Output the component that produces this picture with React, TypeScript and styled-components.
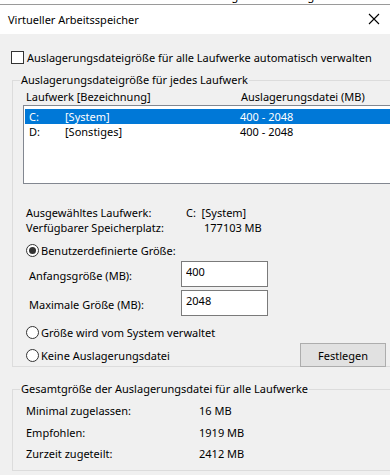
import React from "react";
import styled, { createGlobalStyle } from "styled-components";

const GlobalStyle = createGlobalStyle`
  html, body {
    margin: 0;
    padding: 0;
    background: #f0f0f0;
  }
  body {
    font-family: "Noto Sans", "Liberation Sans", sans-serif;
    font-size: 11px;
    line-height: 15px;
    color: #000;
  }
`;

const drives = [
    { letter: "C:", label: "[System]", size: "400 - 2048", selected: true },
    { letter: "D:", label: "[Sonstiges]", size: "400 - 2048", selected: false },
];

const totals = [
    { label: "Minimal zugelassen:", value: "16 MB" },
    { label: "Empfohlen:", value: "1919 MB" },
    { label: "Zurzeit zugeteilt:", value: "2412 MB" },
];

export default function App() {
    return (
        <>
            <GlobalStyle />
            <Window>
                <BackStrip>
                    <BackText>Visuelle Effekte &nbsp; Erweitert &nbsp; Datenausführungsverhinderung</BackText>
                </BackStrip>
                <TitleBar>
                    <Title>Virtueller Arbeitsspeicher</Title>
                    <Close>
                        <svg width="12" height="12" viewBox="0 0 12 12">
                            <path d="M1 1 L11 11 M11 1 L1 11" stroke="#000" strokeWidth="1.1" fill="none" />
                        </svg>
                    </Close>
                </TitleBar>
                <Body>
                    <CheckRow>
                        <CheckBox />
                        <span>Auslagerungsdateigröße für alle Laufwerke automatisch verwalten</span>
                    </CheckRow>

                    <Group $height={295}>
                        <Legend>Auslagerungsdateigröße für jedes Laufwerk</Legend>
                        <ListHeader>
                            <DriveCol>Laufwerk [Bezeichnung]</DriveCol>
                            <span>Auslagerungsdatei (MB)</span>
                        </ListHeader>
                        <ListBox>
                            {drives.map((d) => (
                                <ListRow key={d.letter} $selected={d.selected}>
                                    <LetterCol>{d.letter}</LetterCol>
                                    <LabelCol>{d.label}</LabelCol>
                                    <span>{d.size}</span>
                                </ListRow>
                            ))}
                        </ListBox>

                        <InfoBlock>
                            <InfoRow>
                                <InfoLabel $width={160}>Ausgewähltes Laufwerk:</InfoLabel>
                                <span>C:&nbsp;&nbsp;[System]</span>
                            </InfoRow>
                            <InfoRow>
                                <InfoLabel $width={178}>Verfügbarer Speicherplatz:</InfoLabel>
                                <span>177103 MB</span>
                            </InfoRow>
                        </InfoBlock>

                        <RadioRow>
                            <Radio $checked />
                            <span>Benutzerdefinierte Größe:</span>
                        </RadioRow>
                        <FieldRow>
                            <FieldLabel>Anfangsgröße (MB):</FieldLabel>
                            <Input defaultValue="400" />
                        </FieldRow>
                        <FieldRow>
                            <FieldLabel>Maximale Größe (MB):</FieldLabel>
                            <Input defaultValue="2048" />
                        </FieldRow>
                        <RadioRow $top={8}>
                            <Radio />
                            <span>Größe wird vom System verwaltet</span>
                        </RadioRow>
                        <BottomRow>
                            <RadioRow $top={0}>
                                <Radio />
                                <span>Keine Auslagerungsdatei</span>
                            </RadioRow>
                            <Button>Festlegen</Button>
                        </BottomRow>
                    </Group>

                    <Group $height={90} $top={14}>
                        <Legend>Gesamtgröße der Auslagerungsdatei für alle Laufwerke</Legend>
                        <TotalList>
                            {totals.map((t) => (
                                <TotalRow key={t.label}>
                                    <TotalLabel>{t.label}</TotalLabel>
                                    <span>{t.value}</span>
                                </TotalRow>
                            ))}
                        </TotalList>
                    </Group>
                </Body>
            </Window>
        </>
    );
}

const Window = styled.div`
  width: 390px;
  height: 475px;
  overflow: hidden;
  background: #f0f0f0;
`;

const BackStrip = styled.div`
  height: 4px;
  overflow: hidden;
  background: #fff;
  border-bottom: 1px solid #9a9a9a;
`;

const BackText = styled.div`
  margin-top: -11px;
  padding-left: 4px;
  white-space: nowrap;
  line-height: 14px;
`;

const TitleBar = styled.div`
  display: flex;
  align-items: center;
  justify-content: space-between;
  height: 28px;
  padding: 0 8px 1px;
  background: #fff;
`;

const Title = styled.div`
  font-size: 11px;
`;

const Close = styled.div`
  display: flex;
  align-items: center;
  justify-content: center;
  width: 16px;
  height: 16px;
`;

const Body = styled.div`
  padding: 16px 0 0 11px;
`;

const CheckRow = styled.label`
  display: flex;
  align-items: center;
  gap: 3px;
  height: 14px;
  white-space: nowrap;
`;

const CheckBox = styled.span`
  flex: none;
  box-sizing: border-box;
  width: 13px;
  height: 13px;
  border: 1px solid #333;
  background: #fff;
`;

const Group = styled.fieldset<{ $height: number; $top?: number }>`
  box-sizing: border-box;
  width: 400px;
  height: ${(p) => p.$height}px;
  margin: ${(p) => p.$top ?? 8}px 0 0 1px;
  padding: 0 0 0 10px;
  border: 1px solid #dcdcdc;
  min-width: 0;
`;

const Legend = styled.legend`
  padding: 0 1px;
  margin-left: -3px;
  white-space: nowrap;
  line-height: 16px;
`;

const ListHeader = styled.div`
  display: flex;
  height: 17px;
  align-items: center;
  padding-left: 3px;
  white-space: nowrap;
`;

const DriveCol = styled.span`
  width: 215px;
`;

const ListBox = styled.div`
  box-sizing: border-box;
  height: 79px;
  padding: 3px 0 0 1px;
  border: 1px solid #828790;
  background: #fff;
`;

const ListRow = styled.div<{ $selected: boolean }>`
  display: flex;
  align-items: center;
  height: 15px;
  padding-left: 4px;
  background: ${(p) => (p.$selected ? "#0078d7" : "transparent")};
  color: ${(p) => (p.$selected ? "#fff" : "#000")};
  white-space: nowrap;
`;

const LetterCol = styled.span`
  width: 36px;
`;

const LabelCol = styled.span`
  width: 175px;
`;

const InfoBlock = styled.div`
  margin-top: 21px;
  padding-left: 3px;
`;

const InfoRow = styled.div`
  display: flex;
  height: 15px;
  align-items: center;
  white-space: nowrap;
`;

const InfoLabel = styled.span<{ $width: number }>`
  width: ${(p) => p.$width}px;
`;

const RadioRow = styled.div<{ $top?: number }>`
  display: flex;
  align-items: center;
  gap: 2px;
  height: 16px;
  margin-top: ${(p) => p.$top ?? 7}px;
  padding-left: 3px;
  white-space: nowrap;
`;

const Radio = styled.span<{ $checked?: boolean }>`
  position: relative;
  flex: none;
  box-sizing: border-box;
  width: 13px;
  height: 13px;
  border: 1px solid #333;
  border-radius: 50%;
  background: #fff;

  &::after {
    content: "";
    display: ${(p) => (p.$checked ? "block" : "none")};
    position: absolute;
    left: 2px;
    top: 2px;
    width: 7px;
    height: 7px;
    border-radius: 50%;
    background: #333;
  }
`;

const FieldRow = styled.div`
  display: flex;
  align-items: center;
  height: 26px;
  margin-top: 3px;
  padding-left: 6px;
`;

const FieldLabel = styled.span`
  width: 152px;
  padding-top: 3px;
  white-space: nowrap;
`;

const Input = styled.input`
  box-sizing: border-box;
  width: 87px;
  height: 26px;
  padding: 0 0 6px 4px;
  border: 1px solid #7a7a7a;
  background: #fff;
  font-family: inherit;
  font-size: 11px;
  outline: none;
`;

const BottomRow = styled.div`
  display: flex;
  align-items: center;
  justify-content: space-between;
  width: 363px;
  margin-top: 3px;
`;

const Button = styled.button`
  box-sizing: border-box;
  width: 86px;
  height: 24px;
  border: 1px solid #adadad;
  background: #e1e1e1;
  font-family: inherit;
  font-size: 11px;
  color: #000;
`;

const TotalList = styled.div`
  padding: 3px 0 0 3px;
`;

const TotalRow = styled.div`
  display: flex;
  align-items: center;
  height: 21.5px;
  white-space: nowrap;
`;

const TotalLabel = styled.span`
  width: 173px;
`;
